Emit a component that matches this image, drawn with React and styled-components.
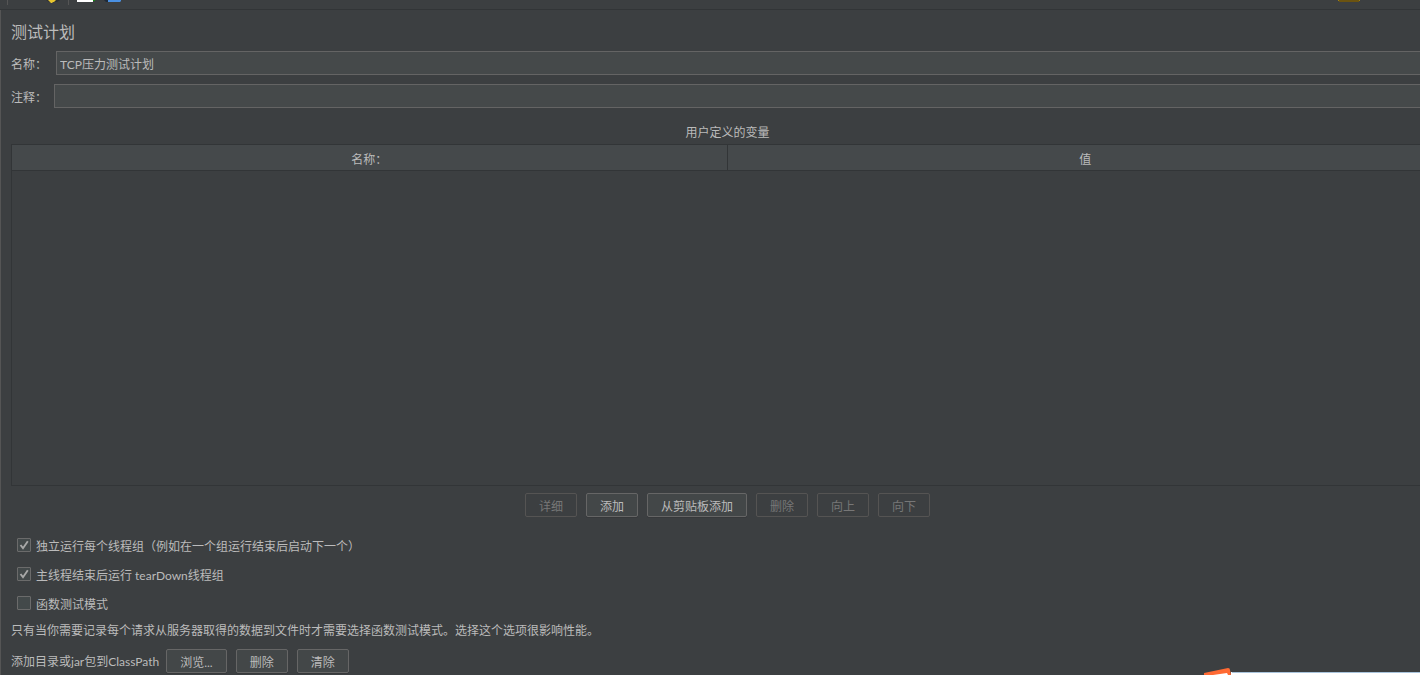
import React, {useState} from 'react';
import styled, {createGlobalStyle} from 'styled-components';

const variableButtons = [
  {label: '详细', disabled: true},
  {label: '添加', disabled: false},
  {label: '从剪贴板添加', disabled: false},
  {label: '删除', disabled: true},
  {label: '向上', disabled: true},
  {label: '向下', disabled: true},
];

function App() {
  const [name, setName] = useState('TCP压力测试计划');
  const [comment, setComment] = useState('');
  const [options, setOptions] = useState([
    {id: 'serialize', label: '独立运行每个线程组（例如在一个组运行结束后启动下一个）', checked: true},
    {id: 'teardown', label: '主线程结束后运行 tearDown线程组', checked: true},
    {id: 'functional', label: '函数测试模式', checked: false},
  ]);

  const toggle = (id) => {
    setOptions(options.map((o) => (o.id === id ? {...o, checked: !o.checked} : o)));
  };

  return (
    <Window>
      <GlobalStyle />
      <Toolbar>
        <ToolbarIcons />
        <WarningIcon />
      </Toolbar>
      <Panel>
        <Title>测试计划</Title>
        <Fields>
          <Field $gap="9px">
            <FieldLabel htmlFor="name">名称：</FieldLabel>
            <TextInput id="name" value={name} onChange={(e) => setName(e.target.value)} />
          </Field>
          <Field $gap="7px">
            <FieldLabel htmlFor="comment">注释：</FieldLabel>
            <TextInput id="comment" value={comment} onChange={(e) => setComment(e.target.value)} />
          </Field>
        </Fields>
        <TableTitle id="variables">用户定义的变量</TableTitle>
        <ScrollPane>
          <Table aria-labelledby="variables">
            <thead>
              <tr>
                <th>名称：</th>
                <th>值</th>
              </tr>
            </thead>
          </Table>
        </ScrollPane>
        <ButtonBar>
          {variableButtons.map((b) => (
            <Button key={b.label} disabled={b.disabled}>{b.label}</Button>
          ))}
        </ButtonBar>
        <Options>
          {options.map((o) => (
            <Option key={o.id}>
              <Checkbox type="checkbox" checked={o.checked} onChange={() => toggle(o.id)} />
              <OptionText>{o.label}</OptionText>
            </Option>
          ))}
        </Options>
        <Note>只有当你需要记录每个请求从服务器取得的数据到文件时才需要选择函数测试模式。选择这个选项很影响性能。</Note>
        <ClassPath>
          <ClassPathLabel>添加目录或jar包到ClassPath</ClassPathLabel>
          <ClassPathButtons>
            <Button>浏览...</Button>
            <Button>删除</Button>
            <Button>清除</Button>
          </ClassPathButtons>
        </ClassPath>
      </Panel>
      <Popup>
        <PopupLogo />
        <PopupBody />
      </Popup>
    </Window>
  );
}

// only the lower edge of the toolbar icons shows
const ToolbarIcons = () => (
  <svg width="130" height="9" viewBox="0 0 130 9" aria-hidden="true">
    <rect x="7" width="1" height="5" fill="#555555" />
    <path d="M46 0h14l-3 2h-8z" fill="#2f3133" />
    <path d="M48 0h8l-2 2h-1l-1 1h-1l-1-1z" fill="#e8c52e" />
    <rect x="68" width="1" height="5" fill="#555555" />
    <rect x="77" width="16" height="2" fill="#ffffff" />
    <rect x="93" width="2" height="1" fill="#128a12" />
    <path d="M104 0h5v2h-3z" fill="#1f2a38" />
    <path d="M108 0h13v1l-1 1h-12z" fill="#4a90e2" />
  </svg>
);

const WarningIcon = () => (
  <svg width="22" height="2" viewBox="0 0 22 2" aria-hidden="true">
    <rect width="22" height="1" fill="#a08010" />
    <rect x="1" width="20" height="2" fill="#6b5310" />
  </svg>
);

const PopupLogo = () => (
  <svg width="28" height="7" viewBox="0 0 28 7" aria-hidden="true">
    <path d="M27 4h1v3h-1z" fill="#ffffff" />
    <path d="M0 7V5L24 0Q26 0 26 2L27 7z" fill="#ff6a33" />
    <path d="M9 7L23 5L24 7z" fill="#ffffff" />
  </svg>
);

const GlobalStyle = createGlobalStyle`
  *{
    box-sizing: border-box;
  }
  body{
    margin: 0;
    background: #3c3f41;
  }
  body, input, button{
    font-family: Lato, "Noto Sans CJK SC", sans-serif;
    font-size: 12px;
    line-height: 20px;
    color: #bbbbbb;
  }
`;

const Window = styled.div`
  position: relative;
  display: flex;
  flex-direction: column;
  min-height: 100vh;
  overflow: hidden;
`;

const Toolbar = styled.header`
  display: flex;
  justify-content: space-between;
  height: 10px;
  padding-right: 60px;
  border-bottom: 1px solid #323537;
`;

/* the panel runs on past the right edge of the window */
const Panel = styled.main`
  flex: 1;
  display: flex;
  flex-direction: column;
  margin-right: -24px;
  padding: 11px 0 2px 10px;
  border-left: 1px solid #555555;
`;

const Title = styled.h1`
  margin: 0 0 8px;
  font-size: 16px;
  font-weight: 400;
  line-height: 22px;
`;

const Fields = styled.div`
  display: flex;
  flex-direction: column;
  gap: 9px;
`;

const Field = styled.div`
  display: flex;
  align-items: center;
  gap: ${(props) => props.$gap};
`;

const FieldLabel = styled.label`
  padding-top: 4px;
`;

const TextInput = styled.input`
  flex: 1;
  min-width: 0;
  height: 24px;
  padding: 0 3px;
  border: 1px solid #646464;
  border-radius: 0;
  background: #45494a;
  outline: none;
`;

const TableTitle = styled.h2`
  margin: 15px 0 1px;
  font-size: 12px;
  font-weight: 400;
  line-height: 20px;
  text-align: center;
`;

const ScrollPane = styled.div`
  flex: 1;
  border: 1px solid #323537;
`;

const Table = styled.table`
  width: 100%;
  table-layout: fixed;
  border-collapse: separate;
  border-spacing: 0;
  th{
    height: 26px;
    padding: 4px 0 0;
    font-weight: 400;
    background: #45494b;
    border-bottom: 1px solid #323537;
  }
  th:first-child{
    border-right: 1px solid #323537;
  }
`;

const ButtonBar = styled.div`
  display: flex;
  justify-content: center;
  gap: 9px;
  margin-top: 7px;
`;

const Button = styled.button`
  height: 24px;
  padding: 4px 13px 0;
  line-height: 18px;
  border: 1px solid #666666;
  border-radius: 2px;
  background: #434748;
  box-shadow: 0 1px 0 #37393b;
  &:disabled{
    color: #777777;
    border-color: #555453;
    background: none;
    box-shadow: none;
  }
`;

const Options = styled.div`
  display: flex;
  flex-direction: column;
  align-items: flex-start;
  gap: 9px;
  margin-top: 18px;
  padding-left: 6px;
`;

const Option = styled.label`
  display: flex;
  align-items: center;
  gap: 5px;
`;

const OptionText = styled.span`
  padding-top: 4px;
  line-height: 16px;
`;

const Checkbox = styled.input`
  appearance: none;
  width: 14px;
  height: 14px;
  margin: 0;
  border: 1px solid #6b6b6b;
  border-radius: 1px;
  background: #43494a;
  &:checked{
    background: #43494a url("data:image/svg+xml,%3Csvg xmlns='http://www.w3.org/2000/svg' viewBox='0 0 12 12'%3E%3Cpath d='M2.5 6l2.5 3.2L9.8 2.3' fill='none' stroke='%23a8a8a8' stroke-width='1.9'/%3E%3C/svg%3E") center / 12px 12px no-repeat;
  }
`;

const Note = styled.p`
  margin: 8px 0;
`;

const ClassPath = styled.div`
  display: flex;
  align-items: center;
  gap: 7px;
`;

const ClassPathLabel = styled.span`
  padding-top: 2px;
`;

const ClassPathButtons = styled.div`
  display: flex;
  gap: 9px;
`;

/* corner of another window lying over this one */
const Popup = styled.div`
  position: absolute;
  right: 0;
  bottom: 0;
  display: flex;
  align-items: flex-end;
  width: 216px;
`;

const PopupBody = styled.div`
  flex: 1;
  height: 3px;
  background: #ffffff;
  border-top: 1px solid #a9c4dc;
`;

export default App;
